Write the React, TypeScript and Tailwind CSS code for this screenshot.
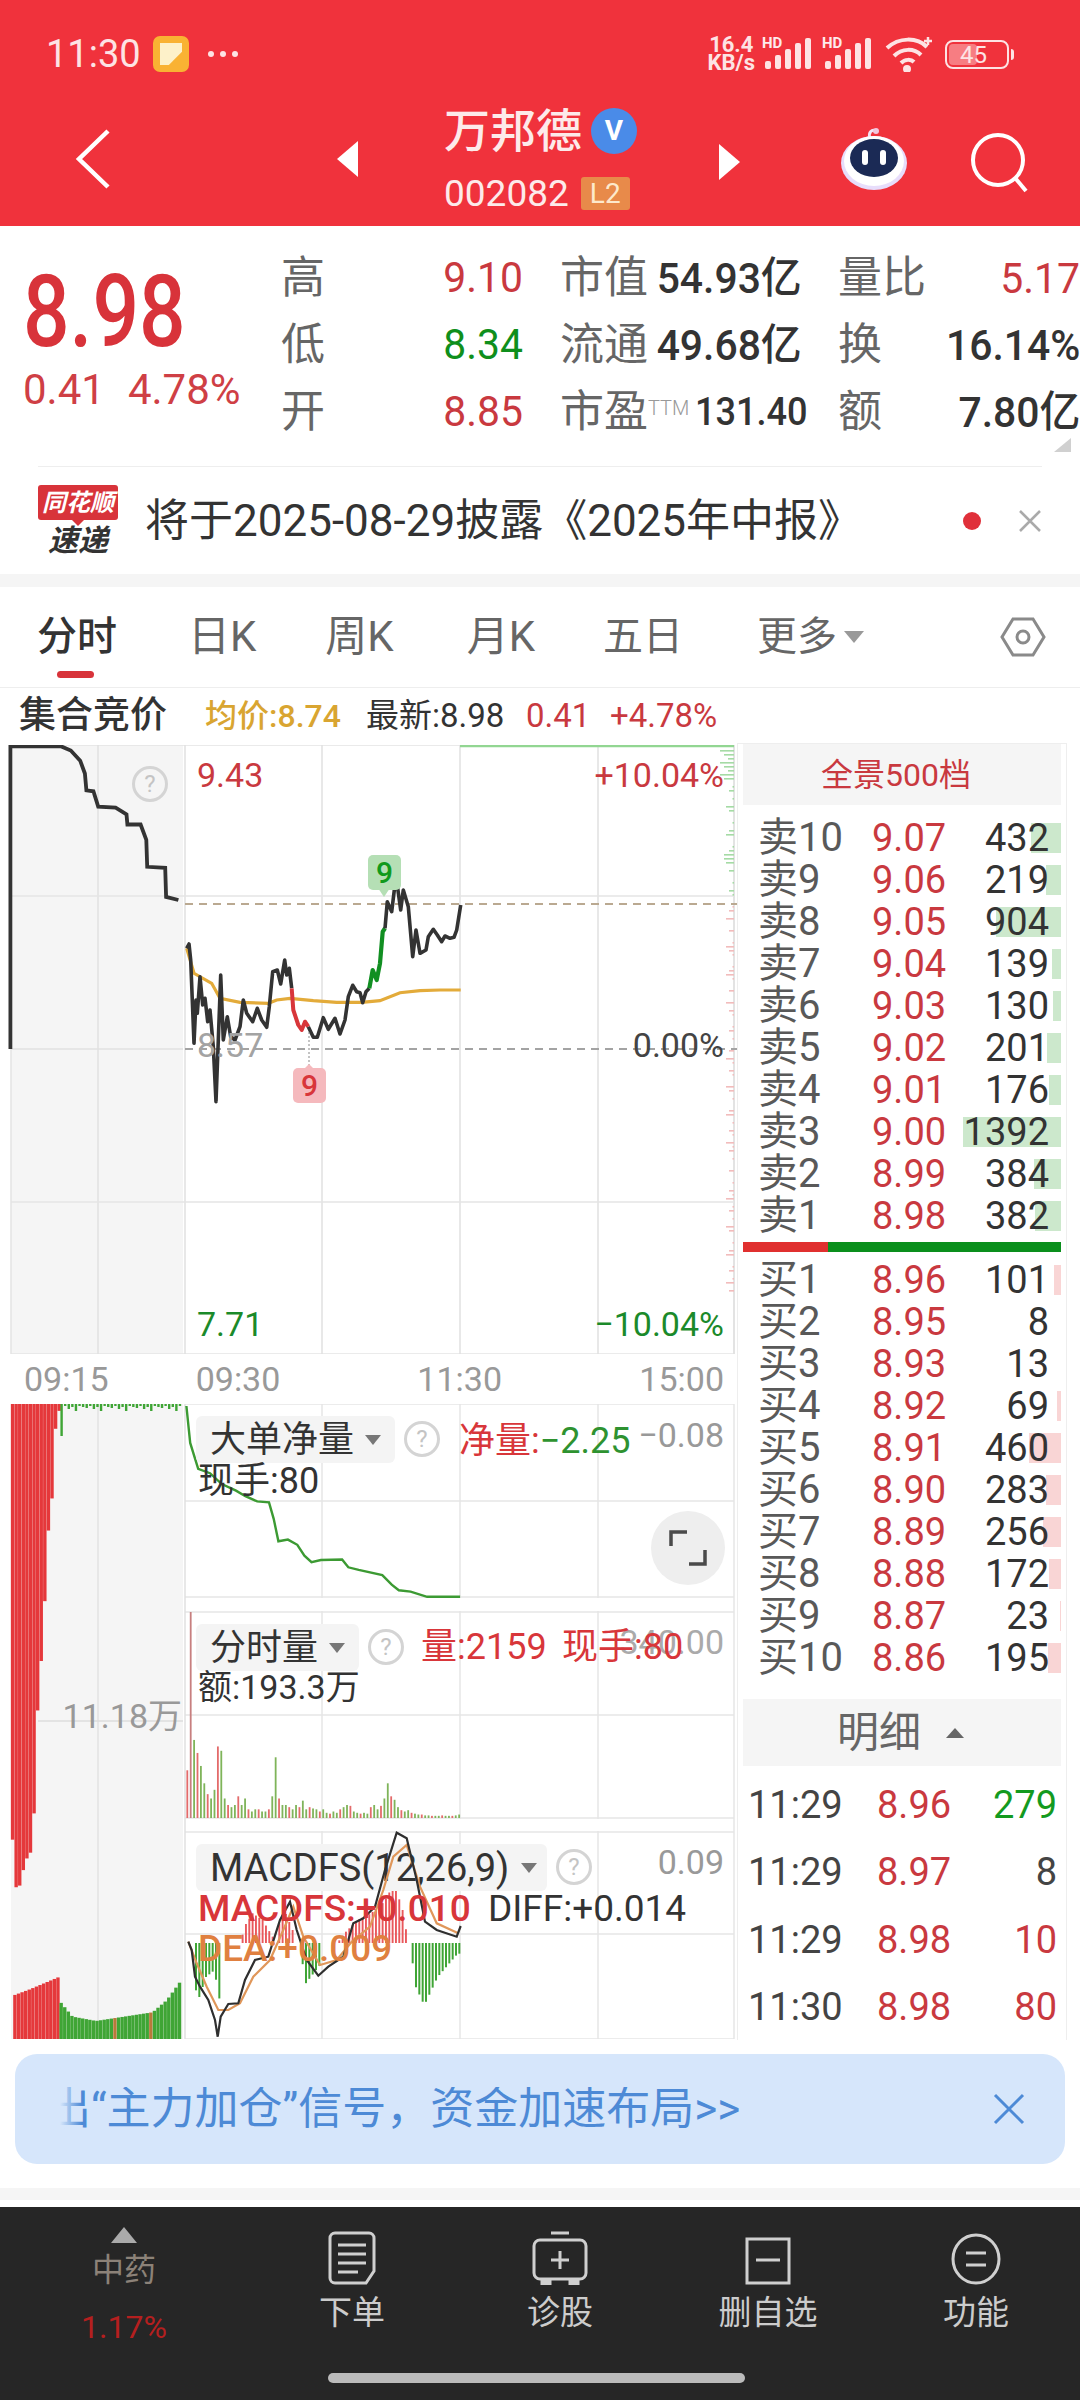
import React from "react";

type P = [number, number];
const z2 = (p: P[]): P[] => p.map(([x, y]) => [x / 2.119, y / 1.96 + 600]);
const z3 = (p: P[]): P[] => p.map(([x, y]) => [x / 2.119, y / 2.306 + 1380]);
const z6 = (p: P[]): P[] => p.map(([x, y]) => [180 + x / 3, 840 + y / 3]);
const z7 = (p: P[]): P[] => p.map(([x, y]) => [180 + x / 3, 1830 + y / 3]);
const pts = (p: P[]) => p.map(([x, y]) => `${x.toFixed(1)},${y.toFixed(1)}`).join(" ");
const interp = (t: P[], x: number) => {
  for (let i = 0; i < t.length - 1; i++) {
    if (x <= t[i + 1][0]) {
      const f = (x - t[i][0]) / (t[i + 1][0] - t[i][0]);
      return t[i][1] + (t[i + 1][1] - t[i][1]) * f;
    }
  }
  return t[t.length - 1][1];
};

const RED = "#e5383b";
const GREEN = "#3fa535";

const auction: P[] = [[22, 880], [22, 287], [130, 287], [150, 295], [170, 315], [180, 340], [183, 373], [198, 375], [208, 405], [245, 407], [268, 420], [270, 440], [298, 440], [310, 470], [312, 523], [350, 525], [352, 582], [378, 588]];
const price1: P[] = [[20, 325], [27, 312], [32, 360], [42, 610], [48, 480], [52, 520], [60, 410], [68, 495], [75, 475], [83, 545], [90, 510], [100, 620], [108, 785], [115, 600], [122, 405], [130, 600], [142, 530], [152, 590], [165, 600], [180, 560], [190, 480], [200, 520], [218, 545], [232, 505], [245, 540], [260, 562], [268, 500], [278, 395], [292, 390], [302, 432], [314, 360], [320, 405], [328, 385], [335, 445]];
const priceRed: P[] = [[335, 445], [340, 510], [355, 555], [365, 570], [375, 545], [385, 560]];
const price2: P[] = [[385, 560], [400, 592], [412, 592], [430, 533], [445, 568], [465, 535], [480, 582], [495, 540], [505, 470], [518, 436], [530, 455], [540, 458], [548, 488], [558, 455], [568, 445]];
const priceGreen: P[] = [[568, 445], [578, 390], [590, 420], [600, 370], [608, 275], [615, 265]];
const price3: P[] = [[615, 265], [622, 185], [635, 215], [648, 108], [662, 210], [670, 150], [685, 200], [698, 350], [708, 270], [720, 340], [738, 330], [745, 290], [760, 268], [772, 285], [785, 305], [795, 288], [810, 295], [822, 292], [830, 270], [842, 195]];
const avg: P[] = [[20, 325], [42, 400], [95, 430], [120, 475], [180, 487], [265, 490], [290, 480], [330, 475], [400, 482], [470, 487], [545, 487], [600, 482], [660, 458], [720, 452], [780, 450], [842, 450]];

const netLine: P[] = [[395, 60], [403, 145], [420, 205], [445, 215], [470, 240], [500, 255], [520, 268], [545, 280], [570, 282], [580, 320], [590, 372], [610, 368], [630, 380], [645, 405], [660, 420], [680, 415], [725, 414], [738, 432], [760, 438], [810, 450], [830, 472], [845, 485], [870, 488], [905, 500], [975, 500]];
const difLine: P[] = [[25, 335], [35, 360], [45, 440], [60, 470], [85, 510], [105, 570], [113, 620], [122, 560], [145, 522], [175, 520], [195, 450], [225, 390], [265, 380], [300, 270], [330, 215], [350, 300], [380, 390], [415, 437], [445, 410], [490, 380], [520, 280], [550, 265], [585, 230], [615, 120], [650, 8], [680, 25], [710, 150], [735, 275], [770, 300], [830, 320], [842, 288]];
const deaLine: P[] = [[25, 335], [50, 400], [80, 470], [115, 540], [145, 540], [180, 520], [220, 440], [270, 390], [310, 300], [340, 230], [370, 320], [420, 405], [470, 390], [515, 335], [570, 290], [610, 180], [640, 80], [680, 45], [720, 170], [770, 280], [835, 310]];
const vols = [110, 475, 180, 150, 120, 80, 55, 45, 65, 165, 155, 45, 30, 25, 30, 50, 30, 45, 20, 15, 20, 20, 15, 15, 20, 50, 140, 45, 30, 30, 25, 20, 30, 25, 40, 20, 25, 22, 20, 15, 20, 12, 10, 15, 12, 20, 25, 30, 28, 15, 12, 10, 12, 10, 25, 30, 20, 28, 45, 80, 50, 42, 25, 18, 15, 18, 12, 10, 8, 8, 6, 6, 5, 5, 5, 6, 5, 5, 5, 6, 8];

const topRed: P[] = [[23, 1060], [30, 1170], [40, 1165], [50, 1105], [60, 1100], [68, 1020], [75, 780], [85, 630], [93, 480], [100, 325], [107, 270], [115, 95], [125, 60]];
const botRed: P[] = [[28, 1418], [60, 1405], [125, 1375]];
const botGreen: P[] = [[125, 1435], [150, 1468], [200, 1478], [260, 1468], [320, 1458], [350, 1430], [380, 1385]];

const macdTop: P[] = [[180, 338], [190, 290], [215, 250], [245, 270], [275, 320], [285, 338], [288, 300], [310, 240], [335, 300], [345, 338], [470, 338], [490, 310], [530, 270], [570, 250], [610, 215], [640, 160], [665, 240], [682, 338]];
const macdBot: P[] = [[35, 338], [45, 480], [55, 500], [75, 440], [100, 420], [116, 510], [120, 338], [360, 338], [370, 465], [420, 400], [425, 338], [690, 338], [700, 460], [730, 525], [770, 440], [830, 370]];

function Help({ className }: { className: string }) {
  return (
    <div className={`absolute w-[36px] h-[36px] rounded-full border-[3px] border-[#d4d4d4] flex items-center justify-center text-[24px] leading-none text-[#c4c4c4] ${className}`}>?</div>
  );
}
function Caret({ className }: { className?: string }) {
  return <span className={`w-0 h-0 border-l-[8px] border-r-[8px] border-t-[10px] border-l-transparent border-r-transparent border-t-[#777] ${className ?? ""}`} />;
}

function MainChart() {
  const ticks: React.ReactElement[] = [];
  for (let y = 750, i = 0; y < 1300; y += 4, i++) {
    const n = y < 780 ? 14 - (i % 3) * 4 : y > 850 && y < 862 ? 10 : i % 5 === 0 ? 5 : i % 7 === 0 ? 8 : i % 3 === 0 ? 1.5 : 0;
    if (n) ticks.push(<rect key={y} x={734 - n} y={y} width={n} height={1.6} fill={y < 896 ? "#a5dba5" : "#f2bcbc"} />);
  }
  return (
    <div className="relative w-[737px] h-[609px] mt-[2px]">
      <svg className="absolute inset-0" width="737" height="609" viewBox="0 745 737 609">
        <rect x="11" y="745" width="172" height="609" fill="#f5f5f5" />
        <rect x="11" y="745" width="723" height="609" fill="none" stroke="#e4e4e4" strokeWidth="1.5" />
        {[98, 185, 322, 460, 598, 734].map((x) => <line key={x} x1={x} x2={x} y1="745" y2="1354" stroke="#e0e0e0" strokeWidth="1.5" />)}
        <line x1="11" x2="734" y1="896" y2="896" stroke="#e4e4e4" strokeWidth="1.5" />
        <line x1="11" x2="734" y1="1202" y2="1202" stroke="#e4e4e4" strokeWidth="1.5" />
        <line x1="11" x2="183" y1="1049" y2="1049" stroke="#e0e0e0" strokeWidth="1.5" />
        <line x1="185" x2="737" y1="904" y2="904" stroke="#baa991" strokeWidth="1.8" strokeDasharray="8 6" />
        <line x1="185" x2="737" y1="1049" y2="1049" stroke="#a3a3a3" strokeWidth="1.8" strokeDasharray="8 6" />
        <line x1="460" x2="734" y1="746" y2="746" stroke="#92d692" strokeWidth="2.5" />
        {ticks}
        <polyline points={pts(z2(auction))} fill="none" stroke="#333" strokeWidth="3.8" />
        <polyline points={pts(z6(avg))} fill="none" stroke="#e3ab3a" strokeWidth="3.2" />
        <polyline points={pts(z6(price1))} fill="none" stroke="#333" strokeWidth="3.6" strokeLinejoin="round" />
        <polyline points={pts(z6(priceRed))} fill="none" stroke="#d8363a" strokeWidth="4" strokeLinejoin="round" />
        <polyline points={pts(z6(price2))} fill="none" stroke="#333" strokeWidth="3.6" strokeLinejoin="round" />
        <polyline points={pts(z6(priceGreen))} fill="none" stroke="#118f22" strokeWidth="4.2" strokeLinejoin="round" />
        <polyline points={pts(z6(price3))} fill="none" stroke="#333" strokeWidth="3.6" strokeLinejoin="round" />
        <line x1="309" x2="309" y1="1032" y2="1066" stroke="#888" strokeWidth="1" strokeDasharray="2 2" />
        <path d="M378 888 L384 897 L390 888 Z" fill="#b5dfb5" />
        <path d="M303 1070 L309 1064 L315 1070 Z" fill="#f5b9bd" />
      </svg>
      <Help className="left-[132px] top-[21px]" />
      <span className="absolute left-[197px] top-[13px] text-[34px] leading-none text-[#c9393f]">9.43</span>
      <span className="absolute right-[13px] top-[13px] text-[34px] leading-none text-[#c9393f]">+10.04%</span>
      <span className="absolute left-[197px] top-[283px] text-[34px] leading-none text-[#a3a3a3]">8.57</span>
      <span className="absolute right-[13px] top-[283px] text-[34px] leading-none text-[#444]">0.00%</span>
      <span className="absolute left-[197px] top-[562px] text-[34px] leading-none text-[#1b8a2a]">7.71</span>
      <span className="absolute right-[13px] top-[562px] text-[34px] leading-none text-[#1b8a2a]">−10.04%</span>
      <div className="absolute left-[368px] top-[110px] w-[33px] h-[35px] rounded-[5px] bg-[#b5dfb5] flex items-center justify-center text-[30px] leading-none font-medium text-[#109a1c]">9</div>
      <div className="absolute left-[293px] top-[323px] w-[33px] h-[35px] rounded-[5px] bg-[#f5b9bd] flex items-center justify-center text-[30px] leading-none font-medium text-[#d8363a]">9</div>
    </div>
  );
}

function LowerChart() {
  const bars: React.ReactElement[] = [];
  for (let x = 23; x <= 125; x += 7.6) {
    const b = interp(topRed, x) / 2.306 + 1380;
    bars.push(<rect key={`tr${x}`} x={x / 2.119} y={1404} width={3.4} height={b - 1404} fill={RED} />);
  }
  for (let i = 0, x = 128; x <= 382; x += 7.6, i++) {
    const h = x < 133 ? 32 : [4, 2, 5, 3, 7, 2, 3][i % 7];
    bars.push(<rect key={`tg${x}`} x={x / 2.119} y={1404} width={2.4} height={h} fill={GREEN} />);
  }
  for (let x = 28; x <= 122; x += 7.6) {
    const t = interp(botRed, x) / 2.306 + 1380;
    bars.push(<rect key={`br${x}`} x={x / 2.119} y={t} width={3.4} height={2039 - t} fill={RED} />);
  }
  for (let i = 0, x = 126; x <= 380; x += 7.6, i++) {
    const t = interp(botGreen, x) / 2.306 + 1380;
    bars.push(<rect key={`bg${x}`} x={x / 2.119} y={t} width={3.4} height={2039 - t} fill={i === 15 || i === 25 ? "#b9793a" : GREEN} />);
  }
  vols.forEach((h, i) => {
    const x = (395 + i * 7.2) / 2.119;
    const hh = h / 2.306;
    bars.push(<rect key={`v${i}`} x={x} y={1818 - hh} width={1.8} height={hh} fill={i === 1 ? "#c77f7f" : (i * 7) % 3 === 0 ? "#e36b6b" : "#7fb45a"} />);
  });
  for (let x = 35; x <= 835; x += 10) {
    const top = interp(macdTop, x);
    const bot = interp(macdBot, x);
    if (x >= 180 && x <= 682 && top < 337 && !(x > 345 && x < 470)) {
      const yy = 1830 + top / 3;
      bars.push(<rect key={`mt${x}`} x={180 + x / 3} y={yy} width={1.9} height={1943 - yy} fill="#e9585c" />);
    }
    if (bot > 339) {
      bars.push(<rect key={`mb${x}`} x={180 + x / 3} y={1943} width={2} height={(bot - 338) / 3} fill={GREEN} />);
    }
  }
  return (
    <div className="relative w-[737px] h-[635px]">
      <svg className="absolute inset-0" width="737" height="635" viewBox="0 1404 737 635">
        <rect x="11" y="1404" width="172" height="635" fill="#f5f5f5" />
        {[98, 322, 460, 598].map((x) => <line key={x} x1={x} x2={x} y1="1404" y2="2039" stroke={x === 98 ? "#e2e2e2" : "#e6e6e6"} strokeWidth="1.5" />)}
        {[1404, 1501, 1597, 1612, 1715, 1818, 1832, 1934, 2039].map((y) => <line key={y} x1="185" x2="734" y1={y} y2={y} stroke="#e6e6e6" strokeWidth="1.5" />)}
        <rect x="184" y="1598" width="553" height="13" fill="#fff" />
        <rect x="184" y="1819" width="553" height="12" fill="#fff" />
        <line x1="185" x2="185" y1="1404" y2="2039" stroke="#e0e0e0" strokeWidth="1.5" />
        <line x1="734" x2="734" y1="1404" y2="2039" stroke="#e6e6e6" strokeWidth="1.5" />
        <line x1="38" x2="183" y1="1721" y2="1721" stroke="#ddd" strokeWidth="1.5" />
        {bars}
        <polyline points={pts(z3(netLine))} fill="none" stroke="#3c9a33" strokeWidth="2.4" />
      </svg>
      <div className="absolute left-[196px] top-[12px] w-[199px] h-[47px] rounded-[6px] bg-[#f4f4f4] pl-[14px] flex items-center gap-[11px] text-[36px] leading-none text-[#333]">大单净量<Caret /></div>
      <div className="absolute left-[196px] top-[220px] w-[163px] h-[47px] rounded-[6px] bg-[#f4f4f4] pl-[14px] flex items-center gap-[11px] text-[36px] leading-none text-[#333]">分时量<Caret /></div>
      <div className="absolute left-[196px] top-[440px] w-[351px] h-[47px] rounded-[6px] bg-[#f4f4f4] pl-[14px] flex items-center gap-[12px] text-[38px] leading-none text-[#333]">MACDFS(12,26,9)<Caret /></div>
      <svg className="absolute inset-0" width="737" height="635" viewBox="0 1404 737 635">
        <polyline points={pts(z7(deaLine))} fill="none" stroke="#e0975a" strokeWidth="2.2" />
        <polyline points={pts(z7(difLine))} fill="none" stroke="#2f2f2f" strokeWidth="2.2" />
      </svg>
      <Help className="left-[404px] top-[17px]" />
      <Help className="left-[368px] top-[225px]" />
      <Help className="left-[556px] top-[445px]" />
      <span className="absolute left-[459px] top-[19px] text-[36px] leading-none text-[#d8363a]">净量:<span className="text-[#2e9230]">−2.25</span></span>
      <span className="absolute right-[13px] top-[14px] text-[34px] leading-none text-[#999]">−0.08</span>
      <span className="absolute left-[198px] top-[59px] text-[36px] leading-none text-[#333]">现手:80</span>
      <span className="absolute right-[13px] top-[221px] text-[34px] leading-none text-[#aaa]">340.00</span>
      <span className="absolute left-[421px] top-[225px] text-[36px] leading-none text-[#d8363a]">量:2159</span>
      <span className="absolute left-[562px] top-[225px] text-[36px] leading-none text-[#d8363a]">现手:80</span>
      <span className="absolute left-[198px] top-[266px] text-[34px] leading-none text-[#333]">额:193.3万</span>
      <span className="absolute right-[555px] top-[295px] text-[34px] leading-none text-[#999]">11.18万</span>
      <span className="absolute right-[13px] top-[441px] text-[34px] leading-none text-[#999]">0.09</span>
      <span className="absolute left-[198px] top-[486px] text-[37px] leading-none font-medium text-[#d8363a]">MACDFS:+0.010</span>
      <span className="absolute left-[488px] top-[486px] text-[37px] leading-none text-[#333]">DIFF:+0.014</span>
      <span className="absolute left-[198px] top-[526px] text-[37px] leading-none font-medium text-[#e08040]">DEA:+0.009</span>
      <div className="absolute left-[651px] top-[107px] w-[74px] h-[74px] rounded-full bg-[#eeeeee] flex items-center justify-center">
        <svg width="40" height="40" viewBox="0 0 40 40" fill="none" stroke="#4a4a4a" strokeWidth="3.5">
          <path d="M3 18V4H19" />
          <path d="M37 22V36H21" />
        </svg>
      </div>
    </div>
  );
}

const sells: [string, string, string, number][] = [
  ["卖10", "9.07", "432", 30], ["卖9", "9.06", "219", 15], ["卖8", "9.05", "904", 65], ["卖7", "9.04", "139", 9], ["卖6", "9.03", "130", 8],
  ["卖5", "9.02", "201", 14], ["卖4", "9.01", "176", 12], ["卖3", "9.00", "1392", 98], ["卖2", "8.99", "384", 27], ["卖1", "8.98", "382", 26],
];
const buys: [string, string, string, number][] = [
  ["买1", "8.96", "101", 7], ["买2", "8.95", "8", 0], ["买3", "8.93", "13", 0], ["买4", "8.92", "69", 4], ["买5", "8.91", "460", 32],
  ["买6", "8.90", "283", 15], ["买7", "8.89", "256", 18], ["买8", "8.88", "172", 12], ["买9", "8.87", "23", 1], ["买10", "8.86", "195", 13],
];
const details: [string, string, string, string][] = [
  ["11:29", "8.96", "279", "text-[#139a1f]"], ["11:29", "8.97", "8", "text-[#444]"], ["11:29", "8.98", "10", "text-[#c9393f]"], ["11:30", "8.98", "80", "text-[#c9393f]"],
];

function BookRow({ row, buy }: { row: [string, string, string, number]; buy?: boolean }) {
  return (
    <div className="relative h-[42px] flex items-center pl-[15px] pr-[12px]">
      <div className={`absolute right-0 top-[6px] h-[30px] ${buy ? "bg-[#f9d5d5]" : "bg-[#cce8cc]"}`} style={{ width: row[3] }} />
      <span className="relative w-[114px] text-[40px] leading-none text-[#595959] whitespace-nowrap">{row[0]}</span>
      <span className="relative w-[80px] text-[38px] leading-none text-[#c9393f]">{row[1]}</span>
      <span className="relative flex-1 text-right text-[38px] leading-none text-[#333]">{row[2]}</span>
    </div>
  );
}

function OrderBook() {
  return (
    <div className="w-[330px] h-[1299px] border border-[#eeeeee] px-[5px] flex flex-col">
      <div className="h-[61px] shrink-0 bg-[#f5f5f5] flex items-center justify-center pr-[12px] text-[32px] leading-none text-[#c9393f]">全景500档</div>
      <div className="pt-[12px] flex flex-col">{sells.map((r) => <BookRow key={r[0]} row={r} />)}</div>
      <div className="mt-[5px] h-[10px] flex shrink-0">
        <div className="w-[85px] bg-[#e0302f]" />
        <div className="flex-1 bg-[#0a8f1c]" />
      </div>
      <div className="pt-[7px] flex flex-col">{buys.map((r) => <BookRow key={r[0]} row={r} buy />)}</div>
      <div className="mt-[20px] h-[67px] shrink-0 bg-[#f5f5f5] flex items-center pl-[94px] gap-[25px] text-[42px] leading-none text-[#666]">
        明细
        <span className="w-0 h-0 border-l-[9px] border-r-[9px] border-b-[10px] border-l-transparent border-r-transparent border-b-[#666]" />
      </div>
      <div className="pt-[5px] flex flex-col">
        {details.map((d, i) => (
          <div key={i} className="h-[67.5px] flex items-center pl-[5px] pr-[4px] text-[38px] leading-none">
            <span className="w-[129px] text-[#444]">{d[0]}</span>
            <span className="text-[#c9393f]">{d[1]}</span>
            <span className={`flex-1 text-right ${d[3]}`}>{d[2]}</span>
          </div>
        ))}
      </div>
    </div>
  );
}

function Signal() {
  return (
    <div className="relative w-[48px] h-[34px]">
      <span className="absolute -left-[3px] -top-[1px] text-[15px] leading-none font-bold text-white/90">HD</span>
      <svg className="absolute inset-0" width="48" height="34" viewBox="0 0 48 34" fill="#fde3e4">
        <rect x="0" y="24" width="6" height="8" rx="2" />
        <rect x="10" y="18" width="6" height="14" rx="2" />
        <rect x="20" y="12" width="6" height="20" rx="2" />
        <rect x="30" y="6" width="6" height="26" rx="2" />
        <rect x="40" y="1" width="6" height="31" rx="2" />
      </svg>
    </div>
  );
}

function StatusBar() {
  return (
    <div className="h-[100px] flex items-start pt-[36px] pl-[46px] pr-[66px] text-white">
      <span className="text-[38px] leading-[36px] text-[#fde3e4] w-[107px]">11:30</span>
      <div className="w-[36px] h-[36px] rounded-[7px] bg-[#f9b233] flex items-center justify-center">
        <div className="w-[22px] h-[22px] bg-[#fdf1c9] [clip-path:polygon(0_0,100%_0,100%_40%,40%_100%,0_100%)]" />
      </div>
      <div className="ml-[19px] mt-[15px] flex gap-[6px]">
        <span className="w-[6px] h-[6px] rounded-full bg-[#fde3e4]" />
        <span className="w-[6px] h-[6px] rounded-full bg-[#fde3e4]" />
        <span className="w-[6px] h-[6px] rounded-full bg-[#fde3e4]" />
      </div>
      <div className="ml-auto flex items-center gap-[10px]">
        <div className="flex flex-col items-center text-[22px] leading-[18px] font-bold text-[#fde3e4]">
          <span>16.4</span>
          <span>KB/s</span>
        </div>
        <Signal />
        <div className="ml-[2px]"><Signal /></div>
        <svg width="50" height="36" viewBox="0 0 50 36" fill="none" stroke="#fde3e4" strokeWidth="4" className="ml-[2px]">
          <path d="M2 12C14 1 32 1 42 11" />
          <path d="M9 20C17 12 29 12 36 19" />
          <path d="M16 27C20 23 26 23 29 26" />
          <circle cx="22" cy="33" r="2" fill="#fde3e4" />
          <path d="M43 1V9M39 5H47" strokeWidth="2.5" />
        </svg>
        <div className="flex items-center">
          <div className="w-[64px] h-[29px] rounded-[8px] border-[2px] border-[#fde3e4] flex items-center pl-[2px]">
            <div className="relative h-[21px] w-[28px] rounded-[4px] bg-[#f77d82]">
              <span className="absolute left-[11px] -top-[1px] text-[24px] leading-none text-[#fde3e4]">45</span>
            </div>
          </div>
          <div className="ml-[2px] w-[3px] h-[11px] rounded-r bg-[#fde3e4]" />
        </div>
      </div>
    </div>
  );
}

function Robot() {
  return (
    <svg width="68" height="66" viewBox="0 0 68 66">
      <path d="M30 12C28 6 32 3 36 5" fill="none" stroke="#f3e4f5" strokeWidth="3" />
      <circle cx="36" cy="5" r="3" fill="#f3c6dd" />
      <ellipse cx="34" cy="37" rx="33" ry="27" fill="#e7ddfb" />
      <ellipse cx="34" cy="35" rx="30" ry="25" fill="#ffffff" />
      <ellipse cx="34" cy="32" rx="24" ry="19" fill="#1b2a55" />
      <rect x="22" y="24" width="6" height="15" rx="3" fill="#fff" />
      <rect x="40" y="24" width="6" height="15" rx="3" fill="#fff" />
    </svg>
  );
}

function Header() {
  return (
    <div className="h-[226px] bg-[#f0323c] flex flex-col">
      <StatusBar />
      <div className="flex-1 relative flex items-start">
        <svg width="36" height="60" viewBox="0 0 36 60" fill="none" stroke="#fff" strokeWidth="4.5" className="ml-[75px] mt-[29px] shrink-0">
          <path d="M33 2L4 30L33 58" />
        </svg>
        <span className="ml-[226px] mt-[41px] w-0 h-0 border-y-[18px] border-y-transparent border-r-[21px] border-r-white shrink-0" />
        <div className="ml-[86px] w-[262px] shrink-0 flex flex-col">
          <div className="flex items-center h-[56px] mt-[3px]">
            <span className="text-[46px] leading-none font-medium text-[#fdeaea]">万邦德</span>
            <div className="ml-[9px] w-[46px] h-[46px] rounded-full bg-[#4a8be8] flex items-center justify-center text-[28px] leading-none font-bold text-white">V</div>
          </div>
          <div className="flex items-center mt-[16px]">
            <span className="text-[37px] leading-none text-[#fdeaea]">002082</span>
            <span className="ml-[12px] w-[49px] h-[33px] rounded-[3px] bg-[#e88a4a] flex items-center justify-center text-[28px] leading-none text-[#fde9cc]">L2</span>
          </div>
        </div>
        <span className="ml-[13px] mt-[44px] w-0 h-0 border-y-[18px] border-y-transparent border-l-[21px] border-l-white shrink-0" />
        <div className="ml-[100px] mt-[26px] shrink-0"><Robot /></div>
        <svg width="62" height="62" viewBox="0 0 62 62" fill="none" stroke="#fff" strokeWidth="4" className="ml-[61px] mt-[31px] shrink-0">
          <circle cx="29" cy="29" r="25" />
          <path d="M47 48L57 60" />
        </svg>
      </div>
    </div>
  );
}

function Stat({ label, value, color, w, small }: { label: string; value: string; color: string; w: string; small?: boolean }) {
  return (
    <div className={`flex items-center justify-between ${w}`}>
      <span className="text-[44px] leading-none text-[#666] whitespace-nowrap">
        {label}
        {small && <span className="relative -top-[12px] text-[20px] font-light text-[#999]">TTM</span>}
      </span>
      <span className={`${small ? "text-[38px]" : "text-[43px]"} leading-none ${color === "text-[#333]" ? "font-medium" : "font-normal"} scale-x-[0.95] origin-right whitespace-nowrap ${color}`}>{value}</span>
    </div>
  );
}

function Quote() {
  return (
    <div className="bg-white relative">
      <div className="flex h-[240px] pt-[30px]">
        <div className="w-[281px] shrink-0 pl-[23px] pt-[16px]">
          <div className="text-[100px] leading-[80px] font-medium text-[#d8333a] scale-x-[0.82] origin-left">8.98</div>
          <div className="mt-[17px] flex gap-[23px] text-[42px] leading-none text-[#cf3f45] whitespace-nowrap">
            <span>0.41</span>
            <span>4.78%</span>
          </div>
        </div>
        <div className="flex flex-col gap-[24px] shrink-0">
          {[
            ["高", "9.10", "text-[#c9393f]", "市值", "54.93亿", "量比", "5.17", "text-[#c9393f]"],
            ["低", "8.34", "text-[#0f8f1c]", "流通", "49.68亿", "换", "16.14%", "text-[#333]"],
            ["开", "8.85", "text-[#c9393f]", "市盈", "131.40", "额", "7.80亿", "text-[#333]"],
          ].map((r) => (
            <div key={r[0]} className="h-[43px] flex">
              <Stat label={r[0]} value={r[1]} color={r[2]} w="w-[242px]" />
              <div className="ml-[37px]">
                <Stat label={r[3]} value={r[4]} color="text-[#333]" w="w-[242px]" small={r[3] === "市盈"} />
              </div>
              <div className="ml-[36px]">
                <Stat label={r[5]} value={r[6]} color={r[7]} w="w-[242px]" />
              </div>
            </div>
          ))}
        </div>
      </div>
      <div className="absolute right-[9px] top-[212px] w-[17px] h-[14px] bg-[#d0d0d0] [clip-path:polygon(100%_0,100%_100%,0_100%)]" />
      <div className="mx-[38px] h-px bg-[#eeeeee]" />
      <div className="h-[107px] flex items-center pl-[38px] pr-[38px]">
        <div className="w-[80px] shrink-0 flex flex-col items-center">
          <div className="relative w-[80px] h-[35px] bg-[#d8333a] rounded-[3px] flex items-center justify-center text-[24px] leading-none font-bold italic text-white">
            同花顺
            <span className="absolute left-[34px] -bottom-[6px] w-0 h-0 border-x-[6px] border-x-transparent border-t-[6px] border-t-[#d8333a]" />
          </div>
          <div className="mt-[6px] text-[30px] leading-none font-bold italic text-[#333]">速递</div>
        </div>
        <span className="ml-[27px] text-[44px] leading-none text-[#333] whitespace-nowrap">将于2025-08-29披露《2025年中报》</span>
        <span className="ml-auto w-[18px] h-[18px] rounded-full bg-[#e0303a]" />
        <svg width="24" height="24" viewBox="0 0 24 24" fill="none" stroke="#aaa" strokeWidth="2.5" className="ml-[37px]">
          <path d="M2 2L22 22M22 2L2 22" />
        </svg>
      </div>
    </div>
  );
}

function Tabs() {
  return (
    <div className="h-[101px] flex items-center relative border-b border-[#eeeeee] text-[42px] leading-none text-[#666]">
      <div className="ml-[37px] relative text-[40px] text-[#333] font-medium">
        分时
        <span className="absolute left-[20px] -bottom-[21px] w-[37px] h-[7px] rounded bg-[#d8333a]" />
      </div>
      <span className="ml-[71px]">日K</span>
      <span className="ml-[69px]">周K</span>
      <span className="ml-[73px]">月K</span>
      <span className="ml-[68px] text-[40px]">五日</span>
      <span className="ml-[74px] flex items-center gap-[7px] text-[40px]">更多<Caret className="border-t-[#999] border-l-[10px] border-r-[10px] border-t-[12px]" /></span>
      <svg width="48" height="48" viewBox="0 0 48 48" fill="none" stroke="#8a8a8a" strokeWidth="3" className="absolute right-[33px]">
        <path d="M14 6H34L45 24L34 42H14L3 24Z" />
        <circle cx="24" cy="24" r="6" />
      </svg>
    </div>
  );
}

function InfoRow() {
  return (
    <div className="h-[55px] flex items-center pl-[19px] leading-none whitespace-nowrap">
      <span className="text-[37px] text-[#333] font-medium w-[186px]">集合竞价</span>
      <span className="text-[32px] text-[#d9a531] w-[161px] font-medium">均价:8.74</span>
      <span className="text-[33px] text-[#333] w-[160px]">最新:8.98</span>
      <span className="text-[33px] text-[#c9393f] w-[84px]">0.41</span>
      <span className="text-[33px] text-[#c9393f]">+4.78%</span>
    </div>
  );
}

function Axis() {
  return (
    <div className="h-[50px] flex items-center text-[34px] leading-none text-[#999] pl-[24px] w-[737px]">
      <span>09:15</span>
      <span className="ml-[87px]">09:30</span>
      <span className="ml-[137px]">11:30</span>
      <span className="ml-auto mr-[13px]">15:00</span>
    </div>
  );
}

function Banner() {
  return (
    <div className="h-[148px] bg-white pt-[14px] px-[15px]">
      <div className="h-[110px] rounded-[22px] bg-[#d6e6fb] flex items-center pl-[45px] pr-[40px] text-[44px] leading-none text-[#4d8ad6]">
        <div className="relative w-[690px] overflow-hidden">
          <span className="block -ml-[13px] whitespace-nowrap">出“主力加仓”信号，资金加速布局&gt;&gt;</span>
          <div className="absolute left-0 inset-y-0 w-[22px] bg-gradient-to-r from-[#d6e6fb] to-transparent" />
        </div>
        <svg width="32" height="32" viewBox="0 0 32 32" fill="none" stroke="#4d8ad6" strokeWidth="3" className="ml-auto">
          <path d="M2 2L30 30M30 2L2 30" />
        </svg>
      </div>
    </div>
  );
}

function NavItem({ label, children }: { label: string; children: React.ReactNode }) {
  return (
    <div className="w-[208px] flex flex-col items-center">
      <div className="h-[58px] flex items-end">{children}</div>
      <span className="mt-[11px] text-[33px] leading-none text-[#cccccc]">{label}</span>
    </div>
  );
}

function BottomNav() {
  return (
    <div className="flex-1 bg-[#262626] relative">
      <div className="flex pt-[20px]">
        <div className="w-[248px] flex flex-col items-center">
          <span className="w-0 h-0 border-x-[13px] border-x-transparent border-b-[16px] border-b-[#aaaaaa]" />
          <span className="mt-[11px] text-[32px] leading-none text-[#8c8278]">中药</span>
          <span className="mt-[25px] text-[32px] leading-none text-[#b51f1f]">1.17%</span>
        </div>
        <NavItem label="下单">
          <svg width="48" height="54" viewBox="0 0 48 54" fill="none" stroke="#cfcfcf" strokeWidth="3">
            <path d="M7 2H41A5 5 0 0 1 46 7V40L38 52H7A5 5 0 0 1 2 47V7A5 5 0 0 1 7 2Z" />
            <path d="M10 14H38M10 23H38M10 32H38M10 41H30" />
          </svg>
        </NavItem>
        <NavItem label="诊股">
          <svg width="56" height="54" viewBox="0 0 56 54" fill="none" stroke="#cfcfcf" strokeWidth="3">
            <path d="M19 2H37" />
            <rect x="2" y="9" width="52" height="39" rx="6" />
            <path d="M28 20V38M19 29H37" />
            <path d="M10 49V53H18V49M38 49V53H46V49" fill="#cfcfcf" />
          </svg>
        </NavItem>
        <NavItem label="删自选">
          <svg width="46" height="48" viewBox="0 0 46 48" fill="none" stroke="#cfcfcf" strokeWidth="3">
            <rect x="2" y="2" width="42" height="44" />
            <path d="M11 23H35" />
          </svg>
        </NavItem>
        <NavItem label="功能">
          <svg width="50" height="52" viewBox="0 0 50 52" fill="none" stroke="#cfcfcf" strokeWidth="3">
            <ellipse cx="25" cy="26" rx="23" ry="24" />
            <path d="M15 20H35M15 32H35" />
          </svg>
        </NavItem>
      </div>
      <div className="absolute left-[328px] bottom-[17px] w-[417px] h-[10px] rounded-full bg-[#bbbbbb]" />
    </div>
  );
}

export default function App() {
  return (
    <div className="w-[1080px] h-[2400px] bg-white flex flex-col overflow-hidden font-['Roboto','Noto_Sans_CJK_SC',sans-serif]">
      <Header />
      <Quote />
      <div className="h-[13px] shrink-0 bg-[#f5f5f5]" />
      <Tabs />
      <InfoRow />
      <div className="flex h-[1297px] shrink-0">
        <div className="w-[737px] shrink-0 flex flex-col">
          <MainChart />
          <Axis />
          <LowerChart />
        </div>
        <OrderBook />
      </div>
      <Banner />
      <div className="h-[12px] shrink-0 bg-[#f5f5f5]" />
      <div className="h-[7px] shrink-0 bg-white" />
      <BottomNav />
    </div>
  );
}
